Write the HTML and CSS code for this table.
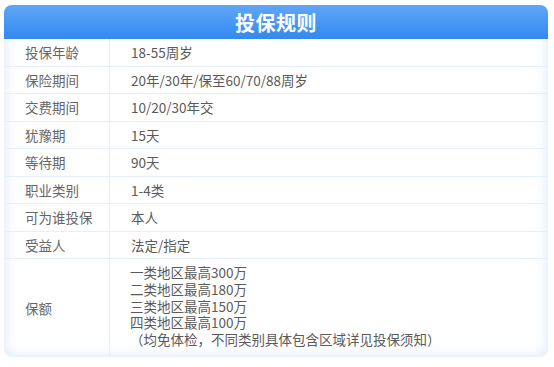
FILE: index.html
```html
<!DOCTYPE html>
<html lang="zh">
<head>
<meta charset="utf-8">
<link rel="stylesheet" href="styles.css">
</head>
<body>
<div class="card">
  <div class="header">投保规则</div>
  <div class="table">
    <div class="row"><div class="label">投保年龄</div><div class="value">18-55周岁</div></div>
    <div class="row"><div class="label">保险期间</div><div class="value">20年/30年/保至60/70/88周岁</div></div>
    <div class="row"><div class="label">交费期间</div><div class="value">10/20/30年交</div></div>
    <div class="row"><div class="label">犹豫期</div><div class="value">15天</div></div>
    <div class="row"><div class="label">等待期</div><div class="value">90天</div></div>
    <div class="row"><div class="label">职业类别</div><div class="value">1-4类</div></div>
    <div class="row"><div class="label">可为谁投保</div><div class="value">本人</div></div>
    <div class="row"><div class="label">受益人</div><div class="value">法定/指定</div></div>
    <div class="row last">
      <div class="label">保额</div>
      <div class="value multi">
        <div class="line">一类地区最高300万</div>
        <div class="line">二类地区最高180万</div>
        <div class="line">三类地区最高150万</div>
        <div class="line">四类地区最高100万</div>
        <div class="line">（均免体检，不同类别具体包含区域详见投保须知）</div>
      </div>
    </div>
  </div>
</div>
</body>
</html>
```
FILE: styles.css
```css
html, body {
  margin: 0;
  padding: 0;
  background: #ffffff;
}
body {
  font-family: "Noto Sans CJK SC", "Noto Sans", sans-serif;
}
.card {
  margin: 5px 6px 0 4px;
  width: 544px;
  height: 352px;
  border-radius: 8px;
  overflow: hidden;
  background: #ffffff;
  box-shadow: inset 0 0 14px rgba(120, 170, 240, 0.28);
  display: flex;
  flex-direction: column;
}
.header {
  height: 34px;
  flex: none;
  background: linear-gradient(#60a6f8, #3389ee);
  color: #ffffff;
  font-size: 20px;
  font-weight: bold;
  display: flex;
  align-items: center;
  justify-content: center;
  letter-spacing: 0.5px;
}
.table {
  flex: 1;
  display: flex;
  flex-direction: column;
}
.row {
  display: grid;
  grid-template-columns: 106px 1fr;
  height: 27.5px;
  box-sizing: border-box;
  border-bottom: 1px solid #e4eefc;
}
.row.last {
  flex: 1;
  border-bottom: none;
}
.label {
  border-right: 1px solid #e4eefc;
  display: flex;
  align-items: center;
  padding-left: 21px;
  font-size: 13.5px;
  color: #666666;
}
.value {
  display: flex;
  align-items: center;
  padding-left: 21px;
  font-size: 13.5px;
  color: #5a5a5a;
}
.value.multi {
  display: flex;
  flex-direction: column;
  align-items: flex-start;
  justify-content: flex-start;
  padding-top: 5px;
  padding-left: 20px;
}
.line {
  height: 16.75px;
  line-height: 16.75px;
  white-space: nowrap;
}
```
